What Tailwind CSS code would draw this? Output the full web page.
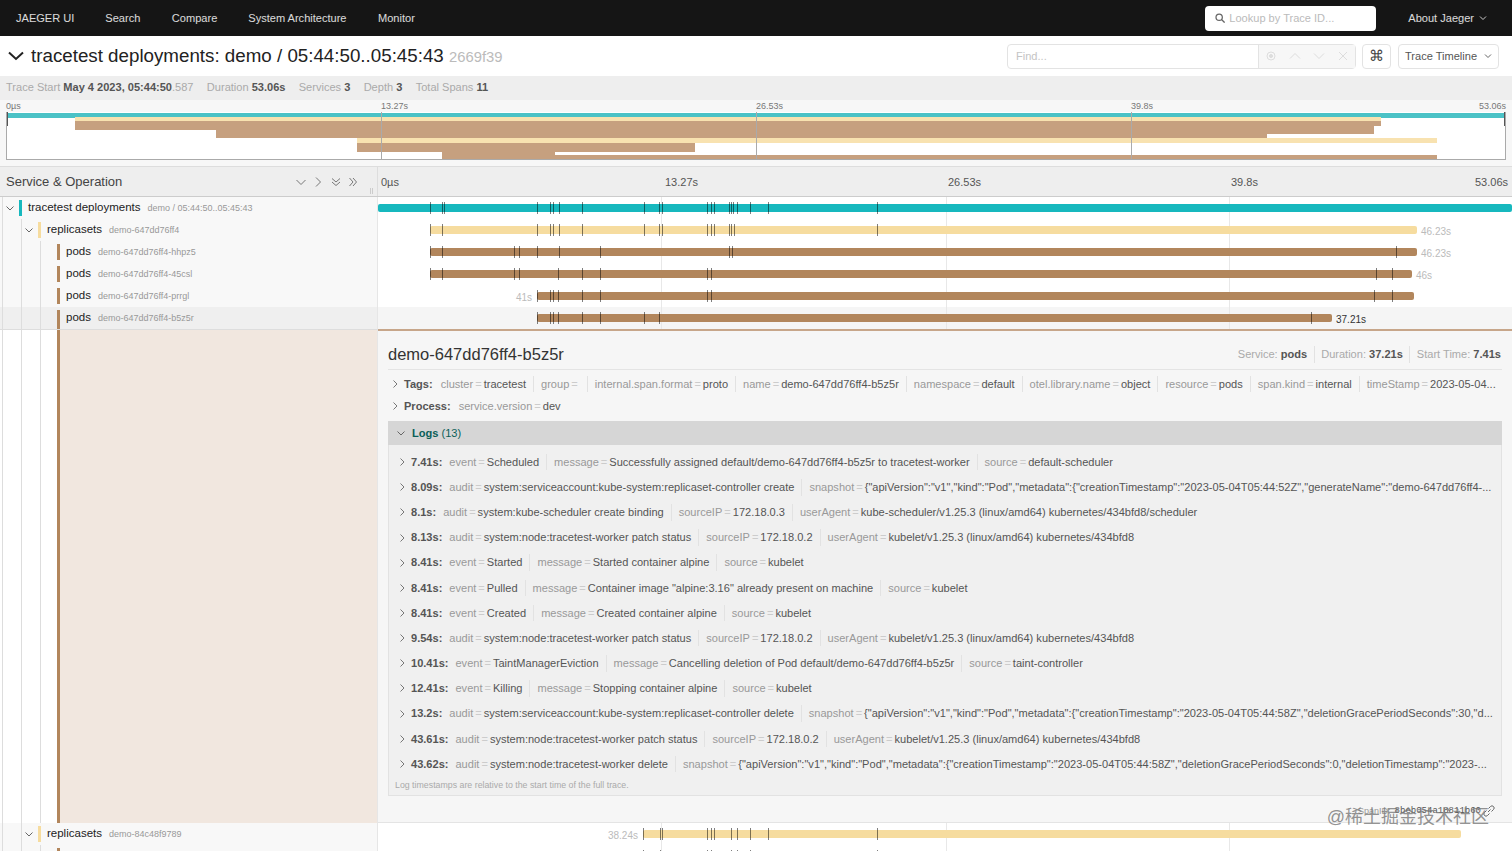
<!DOCTYPE html>
<html lang="en">
<head>
    <meta charset="UTF-8">
    <title>Jaeger UI</title>
    <script src="https://cdn.jsdelivr.net/npm/@tailwindcss/browser@4"></script>
</head>
<body class="h-[851px] overflow-hidden bg-white font-['Liberation_Sans',sans-serif] text-[11.05px] text-[#333]">
    <!-- top nav -->
    <header class="h-9 bg-[#151515] flex items-center text-white/85">
        <span class="ml-4">JAEGER UI</span>
        <span class="ml-[31px]">Search</span>
        <span class="ml-[31.5px]">Compare</span>
        <span class="ml-[31px]">System Architecture</span>
        <span class="ml-[31.5px]">Monitor</span>
        <div class="ml-auto w-[171px] h-[25px] bg-white rounded-sm flex items-center pl-[10px] text-[#bbb]">
            <svg class="w-[10px] h-[10px] mr-[4px]" viewBox="0 0 12 12" fill="none" stroke="#666" stroke-width="1.5"><circle cx="5" cy="5" r="3.8"/><path d="M7.800 7.800 11.500 11.500"/></svg>
            Lookup by Trace ID...
        </div>
        <span class="ml-[32px]">About Jaeger</span>
        <svg class="w-2 h-2 ml-[5px] mr-[25px]" viewBox="0 0 8 8" fill="none" stroke="#ccc"><path d="M1 2.500 4 5.500 7 2.500"/></svg>
    </header>

    <!-- title -->
    <div class="h-10 flex items-center">
        <svg class="w-4 h-4 ml-2" viewBox="0 0 16 16" fill="none" stroke="#222" stroke-width="2"><path d="M1 4.500 8 11 15 4.500"/></svg>
        <h1 class="ml-[7px] text-[18.75px] text-[#222]">tracetest deployments: demo / 05:44:50..05:45:43 <span class="text-[14.8px] text-[#bbb]">2669f39</span></h1>
        <div class="ml-auto w-[349px] h-[25px] flex border border-[#e3e3e3] rounded-sm">
            <span class="w-[251px] pl-2 text-[#c4c4c4] leading-[23px] border-r border-[#e3e3e3]">Find...</span>
            <div class="flex-1 bg-[#f7f7f7] flex items-center justify-around">
                <svg class="w-3 h-3" viewBox="0 0 12 12" fill="none" stroke="#ddd"><circle cx="6" cy="6" r="4"/><circle cx="6" cy="6" r="1.500" fill="#ddd"/></svg>
                <svg class="w-3 h-3" viewBox="0 0 12 12" fill="none" stroke="#ddd"><path d="M1 8.500 6 3.500 11 8.500"/></svg>
                <svg class="w-3 h-3" viewBox="0 0 12 12" fill="none" stroke="#ddd"><path d="M1 3.500 6 8.500 11 3.500"/></svg>
                <svg class="w-3 h-3" viewBox="0 0 12 12" fill="none" stroke="#ddd"><path d="M2 2 10 10M10 2 2 10"/></svg>
            </div>
        </div>
        <div class="ml-[6px] w-[29px] h-[25px] border border-[#e3e3e3] rounded-sm flex items-center justify-center text-[15px] text-[#444]">⌘</div>
        <div class="ml-[7px] mr-[13px] w-[101px] h-[25px] border border-[#e3e3e3] rounded-sm flex items-center pl-[6px] text-[#555] whitespace-nowrap">
            Trace Timeline
            <svg class="w-2 h-2 ml-[7px]" viewBox="0 0 8 8" fill="none" stroke="#666"><path d="M1 2.500 4 5.500 7 2.500"/></svg>
        </div>
    </div>

    <!-- trace stats -->
    <div class="h-6 bg-[#eee] flex items-center pl-[6px] pb-px gap-[13.3px] text-[#aaa]">
        <span>Trace Start <b class="text-[#555]">May 4 2023, 05:44:50</b><span>.587</span></span>
        <span>Duration <b class="text-[#555]">53.06s</b></span>
        <span>Services <b class="text-[#555]">3</b></span>
        <span>Depth <b class="text-[#555]">3</b></span>
        <span>Total Spans <b class="text-[#555]">11</b></span>
    </div>

    <!-- minimap -->
    <div class="h-[67px] bg-[#f7f7f7] border-b border-[#ddd] px-[6px] relative">
        <div class="h-[12px] flex text-[9px] leading-[12px] text-[#777] relative">
            <span>0µs</span>
            <span class="absolute left-[375px]">13.27s</span>
            <span class="absolute left-[750px]">26.53s</span>
            <span class="absolute left-[1125px]">39.8s</span>
            <span class="absolute right-0">53.06s</span>
        </div>
        <div id="minimap" class="relative h-[48px] bg-white border border-t-0 border-[#aaa] overflow-hidden"></div>
    </div>

    <!-- timeline header -->
    <div class="h-[30px] bg-[#eee] border-b border-[#ccc] flex">
        <div class="w-[378px] relative border-r border-[#ddd] flex items-center pl-[6px] text-[13px] text-[#444]">
            Service &amp; Operation
            <div class="ml-auto mr-[17px] flex gap-[3.500px]">
                <svg class="w-[14px] h-[14px]" viewBox="0 0 14 14" fill="none" stroke="#777"><path d="M2.500 5 7 9.500 11.500 5"/></svg>
                <svg class="w-[14px] h-[14px]" viewBox="0 0 14 14" fill="none" stroke="#777"><path d="M5 2.500 9.500 7 5 11.500"/></svg>
                <svg class="w-[14px] h-[14px]" viewBox="0 0 14 14" fill="none" stroke="#777"><path d="M3 3.500 7 7 11 3.500M3 7 7 10.500 11 7"/></svg>
                <svg class="w-[14px] h-[14px]" viewBox="0 0 14 14" fill="none" stroke="#777"><path d="M3.500 3 7 7 3.500 11M7 3 10.500 7 7 11"/></svg>
            </div>
            <i class="absolute right-[4px] bottom-[2px] h-[6px] w-[3px] border-x border-[#ccc]"></i>
        </div>
        <div class="flex-1 relative text-[11px] leading-[30px] text-[#555]">
            <span class="absolute left-[3px]">0µs</span>
            <span class="absolute left-[287px]">13.27s</span>
            <span class="absolute left-[570px]">26.53s</span>
            <span class="absolute left-[853px]">39.8s</span>
            <span class="absolute right-[4px]">53.06s</span>
        </div>
    </div>

    <!-- span rows and detail -->
    <div id="rows"></div>

    <script>
        // x positions below are page pixels read off the trace; the bar area starts at 378
        const TEAL = 'bg-[#17b8be]', YELLOW = 'bg-[#f6dc9f]', BROWN = 'bg-[#b2865c]';
        const spans = [
            { depth: 0, arrow: true, color: TEAL, name: 'tracetest deployments', op: 'demo / 05:44:50..05:45:43', from: 378, to: 1512,
              logs: [430,442,444,537,550,553,559,582,644,659,662,707,711,714,729,731,733,737,750,768,877] },
            { depth: 1, arrow: true, color: YELLOW, name: 'replicasets', op: 'demo-647dd76ff4', from: 430, to: 1417, after: '46.23s',
              logs: [430,442,537,550,553,559,582,644,659,662,707,711,714,729,731,734,877] },
            { depth: 2, color: BROWN, name: 'pods', op: 'demo-647dd76ff4-hhpz5', from: 430, to: 1417, after: '46.23s',
              logs: [430,442,514,519,537,559,600,729,732,1396] },
            { depth: 2, color: BROWN, name: 'pods', op: 'demo-647dd76ff4-45csl', from: 430, to: 1412, after: '46s',
              logs: [430,442,514,519,558,582,600,707,711,1376,1392] },
            { depth: 2, color: BROWN, name: 'pods', op: 'demo-647dd76ff4-prrgl', from: 537, to: 1414, before: '41s',
              logs: [537,550,553,558,582,600,707,711,1374,1392] },
            { depth: 2, color: BROWN, name: 'pods', op: 'demo-647dd76ff4-b5z5r', from: 537, to: 1332, after: '37.21s', selected: true,
              logs: [537,550,553,558,582,600,644,659,1311] },
            { detail: true },
            { depth: 1, arrow: true, color: YELLOW, name: 'replicasets', op: 'demo-84c48f9789', from: 643, to: 1461, before: '38.24s',
              logs: [643,660,662,707,711,714,731,737,750,768,877] },
            { depth: 2, color: BROWN, name: '', op: '', from: 0, to: 0, logs: [643,660,707,711,731,737,750,877] }
        ];

        const kv = (k, v) => `<span class="text-[#999]">${k}<span class="text-[#ccc] mx-[2px]">=</span></span><span class="text-[#555]">${v}</span>`;

        const logs = [
            ['7.41s', [['event','Scheduled'],['message','Successfully assigned default/demo-647dd76ff4-b5z5r to tracetest-worker'],['source','default-scheduler']]],
            ['8.09s', [['audit','system:serviceaccount:kube-system:replicaset-controller create'],['snapshot','{"apiVersion":"v1","kind":"Pod","metadata":{"creationTimestamp":"2023-05-04T05:44:52Z","generateName":"demo-647dd76ff4-...']]],
            ['8.1s', [['audit','system:kube-scheduler create binding'],['sourceIP','172.18.0.3'],['userAgent','kube-scheduler/v1.25.3 (linux/amd64) kubernetes/434bfd8/scheduler']]],
            ['8.13s', [['audit','system:node:tracetest-worker patch status'],['sourceIP','172.18.0.2'],['userAgent','kubelet/v1.25.3 (linux/amd64) kubernetes/434bfd8']]],
            ['8.41s', [['event','Started'],['message','Started container alpine'],['source','kubelet']]],
            ['8.41s', [['event','Pulled'],['message','Container image "alpine:3.16" already present on machine'],['source','kubelet']]],
            ['8.41s', [['event','Created'],['message','Created container alpine'],['source','kubelet']]],
            ['9.54s', [['audit','system:node:tracetest-worker patch status'],['sourceIP','172.18.0.2'],['userAgent','kubelet/v1.25.3 (linux/amd64) kubernetes/434bfd8']]],
            ['10.41s', [['event','TaintManagerEviction'],['message','Cancelling deletion of Pod default/demo-647dd76ff4-b5z5r'],['source','taint-controller']]],
            ['12.41s', [['event','Killing'],['message','Stopping container alpine'],['source','kubelet']]],
            ['13.2s', [['audit','system:serviceaccount:kube-system:replicaset-controller delete'],['snapshot','{"apiVersion":"v1","kind":"Pod","metadata":{"creationTimestamp":"2023-05-04T05:44:58Z","deletionGracePeriodSeconds":30,"d...']]],
            ['43.61s', [['audit','system:node:tracetest-worker patch status'],['sourceIP','172.18.0.2'],['userAgent','kubelet/v1.25.3 (linux/amd64) kubernetes/434bfd8']]],
            ['43.62s', [['audit','system:node:tracetest-worker delete'],['snapshot','{"apiVersion":"v1","kind":"Pod","metadata":{"creationTimestamp":"2023-05-04T05:44:58Z","deletionGracePeriodSeconds":0,"deletionTimestamp":"2023-...']]]
        ];

        const tags = [['cluster','tracetest'],['group',''],['internal.span.format','proto'],['name','demo-647dd76ff4-b5z5r'],['namespace','default'],['otel.library.name','object'],['resource','pods'],['span.kind','internal'],['timeStamp','2023-05-04...']];

        const guides = xs => xs.map(x => `<i class="absolute inset-y-0 w-px bg-[#ddd]" style="left:${x}px"></i>`).join('');
        const pair = (k, v, last) => `<span class="shrink-0 pr-[7px] ${last ? '' : 'mr-[7px] border-r border-[#e2e2e2]'}">${kv(k, v)}</span>`;

        function logRow(time, pairs) {
            const items = pairs.map((p, i) => pair(p[0], p[1], i === pairs.length - 1)).join('');
            return `<div class="h-[25.17px] flex items-center whitespace-nowrap overflow-hidden pl-[9px]">
                <svg class="w-[8px] h-[8px] mr-[5px] shrink-0" viewBox="0 0 8 8" fill="none" stroke="#777"><path d="M2.500 0.500 6 4 2.500 7.500"/></svg>
                <b class="text-[#555] mr-[7px] shrink-0">${time}:</b>${items}</div>`;
        }

        function detailPanel() {
            const tagItems = tags.map((t, i) => pair(t[0], t[1], i === tags.length - 1)).join('');
            return `<div class="h-[494px] flex">
                <div class="w-[378px] shrink-0 relative bg-white border-t border-[#ddd] border-r border-r-[#e6e6e6]">
                    ${guides([2, 21, 40])}
                    <div class="absolute left-[60px] right-0 inset-y-0 bg-[#f1e7df]"></div>
                    <div class="absolute left-[57px] w-[3px] inset-y-0 ${BROWN}"></div>
                </div>
                <div class="flex-1 min-w-0 bg-[#f6f6f6] border-t-2 border-t-[#c7a68a] border-b border-b-[#e4e4e4] pl-[10px] pr-[10px] relative">
                    <div class="h-[39px] pt-[9px] flex items-center border-b border-[#e4e4e4]">
                        <span class="text-[16.500px] text-[#333]">demo-647dd76ff4-b5z5r</span>
                        <span class="ml-auto text-[#aaa] pr-[6.500px] mr-[6.500px] border-r border-[#e2e2e2]">Service: <b class="text-[#555]">pods</b></span>
                        <span class="text-[#aaa] pr-[6.500px] mr-[6.500px] border-r border-[#e2e2e2]">Duration: <b class="text-[#555]">37.21s</b></span>
                        <span class="mr-[1px] text-[#aaa]">Start Time: <b class="text-[#555]">7.41s</b></span>
                    </div>
                    <div class="mt-[3px] h-[22px] flex items-center whitespace-nowrap overflow-hidden">
                        <svg class="w-[8px] h-[8px] ml-[3px] mr-[5px] shrink-0" viewBox="0 0 8 8" fill="none" stroke="#777"><path d="M2.500 0.500 6 4 2.500 7.500"/></svg>
                        <b class="text-[#555] mr-2">Tags:</b>${tagItems}
                    </div>
                    <div class="h-[22px] flex items-center whitespace-nowrap">
                        <svg class="w-[8px] h-[8px] ml-[3px] mr-[5px]" viewBox="0 0 8 8" fill="none" stroke="#777"><path d="M2.500 0.500 6 4 2.500 7.500"/></svg>
                        <b class="text-[#555] mr-2">Process:</b>${kv('service.version', 'dev')}
                    </div>
                    <div class="mt-[4px] bg-[#f0f0f0] border border-[#e2e2e2]">
                        <div class="h-[24px] -m-px bg-[#d6d6d6] flex items-center pl-[9px] text-[#0b5f58]">
                            <svg class="w-[8px] h-[8px] mr-[7px]" viewBox="0 0 8 8" fill="none" stroke="#666"><path d="M0.500 2.500 4 6 7.500 2.500"/></svg>
                            <span><b>Logs</b> (13)</span>
                        </div>
                        <div class="pt-[5.500px] pr-[4px]">${logs.map(l => logRow(l[0], l[1])).join('')}</div>
                        <p class="pl-[6px] h-[18px] leading-[16px] text-[8.800px] text-[#aaa]">Log timestamps are relative to the start time of the full trace.</p>
                    </div>
                    <div class="absolute right-[17px] bottom-[4px] text-[9px] text-[#999] flex items-center">SpanID: <span class="font-['Liberation_Mono',monospace] text-[#555] ml-1">8beb054a18811b60</span>
                        <svg class="w-3 h-3 ml-[2px]" viewBox="0 0 12 12" fill="none" stroke="#666"><path d="M5 7 7.500 4.500M5.500 3.500 7.500 1.500a2 2 0 0 1 3 3L8.500 6.500M6.500 8.500 4.500 10.500a2 2 0 0 1-3-3L3.500 5.500"/></svg>
                    </div>
                    <span class="absolute z-10 right-[23px] bottom-[-9px] text-[18px] whitespace-nowrap text-[#777]/80 font-['Liberation_Sans','Noto_Sans_CJK_SC',sans-serif]">@稀土掘金技术社区</span>
                </div>
            </div>`;
        }

        function spanRow(s) {
            const indent = 6 + s.depth * 19;
            const left = s.from - 378, width = s.to - s.from;
            const ticks = s.logs.map(x => `<i class="absolute top-[5px] h-[12px] w-px bg-black/50" style="left:${x - 378}px"></i>`).join('');
            const before = s.before ? `<span class="absolute top-[5px] text-[10px] text-[#bbb]" style="right:${1134 - left + 5}px">${s.before}</span>` : '';
            const after = s.after ? `<span class="absolute top-[5px] text-[10px] ${s.selected ? 'text-[#333]' : 'text-[#bbb]'}" style="left:${s.to - 378 + 4}px">${s.after}</span>` : '';
            const rowBg = s.selected ? 'bg-[#f5f5f5]' : 'bg-white';
            const nameBg = s.selected ? 'bg-[#efefef]' : 'bg-[#f8f8f8]';
            const arrow = s.arrow ? `<svg class="absolute top-[7px] w-[8px] h-[8px]" style="left:${indent}px" viewBox="0 0 8 8" fill="none" stroke="#666"><path d="M0.500 2.500 4 6 7.500 2.500"/></svg>` : '';
            const label = s.name ? `<span class="absolute top-[2px] whitespace-nowrap" style="left:${indent + 22}px"><span class="text-[11.500px] text-[#222]">${s.name}</span><span class="ml-[7px] text-[9px] text-[#999]">${s.op}</span></span>` : '';
            const strip = s.selected ? 'top-[3px] bottom-0' : 'top-[3px] h-[16px]';
            const grid = [661, 946, 1229].map(x => `<i class="absolute inset-y-0 w-px bg-[#e8e8e8]" style="left:${x - 378}px"></i>`).join('');
            const lines = [2, 21, 40].filter((x, i) => i <= s.depth);
            return `<div class="h-[22px] flex ${rowBg} relative">
                <div class="w-[378px] shrink-0 relative ${nameBg} border-r border-[#e6e6e6]">
                    ${guides(lines)}
                    ${arrow}
                    <i class="absolute w-[3px] ${strip} ${s.color}" style="left:${indent + 13}px"></i>
                    ${label}
                </div>
                <div class="absolute left-[378px] right-0 inset-y-0">
                    ${grid}
                    <i class="absolute top-[7px] h-[8px] rounded-[2px] ${s.color}" style="left:${left}px;width:${width}px"></i>
                    ${ticks}${before}${after}
                </div>
            </div>`;
        }

        document.getElementById('rows').innerHTML = spans.map(s => s.detail ? detailPanel() : spanRow(s)).join('');

        // minimap bars: [top, from, to, colour]
        const miniBars = [
            [1, 6, 1506, 'bg-[#4bc2c6]'],
            [5, 75, 1381, 'bg-[#f8e2b0]'],
            [9, 75, 1381, 'bg-[#c6a07f]'],
            [13, 75, 1374, 'bg-[#c6a07f]'],
            [17, 216, 1374, 'bg-[#c6a07f]'],
            [21, 216, 1267, 'bg-[#c6a07f]'],
            [26, 357, 1437, 'bg-[#f8e2b0]'],
            [31, 357, 695, 'bg-[#c6a07f]'],
            [35, 357, 695, 'bg-[#c6a07f]'],
            [39, 442, 555, 'bg-[#c6a07f]'],
            [43, 442, 1437, 'bg-[#c6a07f]']
        ];
        const miniLines = [381, 756, 1131].map(x => `<i class="absolute top-0 h-full w-px bg-[#aaa]" style="left:${x - 7}px"></i>`).join('');
        document.getElementById('minimap').innerHTML =
            miniBars.map(b => `<i class="absolute h-[4.500px] ${b[3]}" style="top:${b[0]}px;left:${b[1] - 7}px;width:${b[2] - b[1]}px"></i>`).join('')
            + miniLines
            + '<i class="absolute left-0 top-0 h-[14px] w-[1px] bg-[#555]"></i><i class="absolute right-0 top-0 h-[14px] w-[1px] bg-[#555]"></i>';
    </script>
</body>
</html>
